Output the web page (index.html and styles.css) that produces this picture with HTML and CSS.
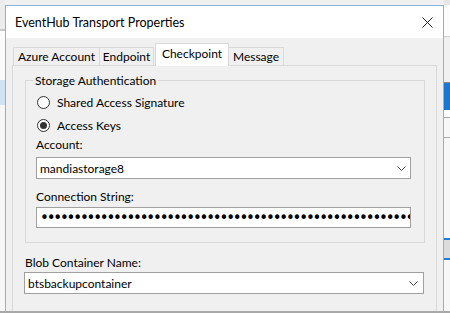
FILE: index.html
```html
<!DOCTYPE html>
<html lang="en">
<head>
    <meta charset="UTF-8">
    <meta name="viewport" content="width=device-width, initial-scale=1.0">
    <title>EventHub Transport Properties</title>
    <link rel="stylesheet" href="styles.css">
</head>
<body>

    <div class="desktop">

        <!-- Ventana de fondo (solo se ven los bordes) -->
        <div class="backdrop">
            <div class="strip strip-left">
                <div class="bl bl-top"></div>
                <div class="bl bl-line"></div>
                <div class="bl bl-white"></div>
                <div class="bl bl-select"></div>
                <div class="bl bl-rest"></div>
            </div>
            <div class="strip strip-right">
                <div class="br br-top"></div>
                <div class="br br-white"></div>
                <div class="br br-gray"></div>
                <div class="br br-blue"></div>
                <div class="br br-white2"></div>
                <div class="br br-row"></div>
                <div class="br br-list"></div>
                <div class="br br-thumb"></div>
                <div class="br br-rest"></div>
            </div>
        </div>

        <div class="dialog">
            <div class="titlebar">
                <span class="title">EventHub Transport Properties</span>
                <svg class="close" width="11" height="11" viewBox="0 0 11 11">
                    <path d="M0.5 0.5 L10.5 10.5 M10.5 0.5 L0.5 10.5" stroke="#222" stroke-width="1" fill="none"/>
                </svg>
            </div>

            <div class="dialog-body">
                <div class="tabs">
                    <div class="tab tab-azure">Azure Account</div>
                    <div class="tab tab-endpoint">Endpoint</div>
                    <div class="tab tab-active">Checkpoint</div>
                    <div class="tab tab-message">Message</div>
                </div>

                <div class="panel">
                    <fieldset class="group">
                        <legend>Storage Authentication</legend>

                        <label class="radio-row">
                            <input type="radio" name="auth">
                            Shared Access Signature
                        </label>
                        <label class="radio-row">
                            <input type="radio" name="auth" checked>
                            Access Keys
                        </label>

                        <div class="field-label label-account">Account:</div>
                        <div class="combo">
                            <span>mandiastorage8</span>
                            <svg class="chevron" width="9" height="5" viewBox="0 0 9 5">
                                <path d="M0.5 0.5 L4.5 4.5 L8.5 0.5" stroke="#444" stroke-width="1" fill="none"/>
                            </svg>
                        </div>

                        <div class="field-label label-conn">Connection String:</div>
                        <input class="secret" type="password" value="abcdefghijklmnopqrstuvwxyzabcdefghijklmnopqrstuvwxyzabcdefghijkl" readonly>
                    </fieldset>

                    <div class="field-label label-blob">Blob Container Name:</div>
                    <div class="combo combo-wide">
                        <span>btsbackupcontainer</span>
                        <svg class="chevron" width="9" height="5" viewBox="0 0 9 5">
                            <path d="M0.5 0.5 L4.5 4.5 L8.5 0.5" stroke="#444" stroke-width="1" fill="none"/>
                        </svg>
                    </div>
                </div>
            </div>
        </div>

    </div>

</body>
</html>
```

FILE: styles.css
```css
body {
    margin: 0;
    padding: 0;
    font-family: 'Lato', 'Liberation Sans', sans-serif;
    font-size: 12px;
    color: #000;
    background: #f0f0f0;
}

.desktop {
    position: relative;
    width: 450px;
    height: 313px;
    overflow: hidden;
    background: #f0f0f0;
    box-sizing: border-box;
    border-bottom: 2px solid #a8a8a8;
}

/* ventana de fondo */
.backdrop {
    display: flex;
    justify-content: space-between;
    height: 100%;
}

.strip {
    display: flex;
    flex-direction: column;
}

.strip-left {
    width: 5px;
}

.bl-top { height: 29px; background: #ececec; }
.bl-line { height: 2px; background: #c9c9c9; }
.bl-white { height: 49px; background: #fbfbfb; }
.bl-select { height: 25px; background: #cfe3f5; }
.bl-rest { flex: 1; background: #f7f7f7; }

.strip-right {
    width: 6px;
}

.br-top { height: 5px; background: #e6e6e6; }
.br-white { height: 31px; background: #fdfdfd; border-bottom: 1px solid #d0d0d0; }
.br-gray { height: 45px; background: #f0f0f0; border-bottom: 1px solid #8a8a8a; }
.br-blue { height: 27px; background: #1976d2; }
.br-white2 { height: 7px; background: #fdfdfd; border-bottom: 1px solid #a8a8a8; }
.br-row { height: 19px; background: #f7f7f7; border-bottom: 1px solid #a8a8a8; }
.br-list { height: 100px; background: #f7f7f7; border-bottom: 2px solid #1e7fd8; }
.br-thumb { height: 18px; background: #dcdcdc; border-bottom: 2px solid #1e7fd8; }
.br-rest { flex: 1; background: #f7f7f7; }

/* dialogo */
.dialog {
    position: absolute;
    left: 5px;
    top: 5px;
    width: 439px;
    height: 330px;
    box-sizing: border-box;
    border: 1px solid #85b4e2;
    background: #f0f0f0;
}

.titlebar {
    display: flex;
    align-items: center;
    justify-content: space-between;
    height: 32px;
    padding: 0 10px 0 9px;
    background: #fff;
}

.title {
    font-size: 12.5px;
    color: #000;
}

.close {
    display: block;
}

.dialog-body {
    padding: 5px 6px 0 6px;
}

.tabs {
    display: flex;
    align-items: flex-end;
    height: 22px;
    position: relative;
    z-index: 1;
}

.tab {
    box-sizing: border-box;
    height: 18px;
    border: 1px solid #d9d9d9;
    border-bottom: none;
    background: #f0f0f0;
    text-align: center;
    line-height: 17px;
    color: #000;
}

.tab-azure { width: 87px; margin-left: 1px; }
.tab-endpoint { width: 55px; margin-left: -1px; }
.tab-message { width: 56px; margin-left: -1px; }

.tab-active {
    width: 74px;
    height: 23px;
    margin-left: 1px;
    margin-bottom: -1px;
    background: #fff;
    line-height: 20px;
    position: relative;
}

.panel {
    box-sizing: border-box;
    width: 425px;
    border: 1px solid #d9d9d9;
    padding: 7px 11px 20px 12px;
    background: #f0f0f0;
}

.group {
    margin: 0;
    padding: 3px 13px 14px 10px;
    border: 1px solid #d9d9d9;
    min-width: 0;
}

.group legend {
    padding: 0 2px;
    margin-left: -3px;
    line-height: 15px;
}

.radio-row {
    display: flex;
    align-items: center;
    height: 22px;
    margin-bottom: 1px;
}

.radio-row input {
    appearance: none;
    -webkit-appearance: none;
    box-sizing: border-box;
    width: 13px;
    height: 13px;
    margin: 0 7px 0 1px;
    border: 1px solid #333;
    border-radius: 50%;
    background: #fff;
    position: relative;
}

.radio-row input:checked::after {
    content: "";
    position: absolute;
    left: 2px;
    top: 2px;
    width: 7px;
    height: 7px;
    border-radius: 50%;
    background: #333;
}

.field-label {
    line-height: 15px;
}

.label-account { margin-top: 1px; }
.label-conn { margin-top: 10px; }
.label-blob { margin-top: 12px; }

.combo {
    box-sizing: border-box;
    display: flex;
    align-items: center;
    justify-content: space-between;
    height: 22px;
    margin-top: 5px;
    padding: 0 4px 0 3px;
    border: 1px solid #a0a0a0;
    background: #fff;
}

.combo-wide {
    margin-top: 2px;
    margin-left: -1px;
    width: 400px;
    padding-right: 5px;
}

.chevron {
    display: block;
}

.secret {
    display: block;
    box-sizing: border-box;
    width: 100%;
    height: 21px;
    margin: 3px 0 0 0;
    padding: 0 0 0 3px;
    border: 1px solid #a0a0a0;
    background: #fff;
    font-family: 'DejaVu Sans', sans-serif;
    font-size: 15px;
    letter-spacing: -2.2px;
    color: #000;
    outline: none;
}
```
